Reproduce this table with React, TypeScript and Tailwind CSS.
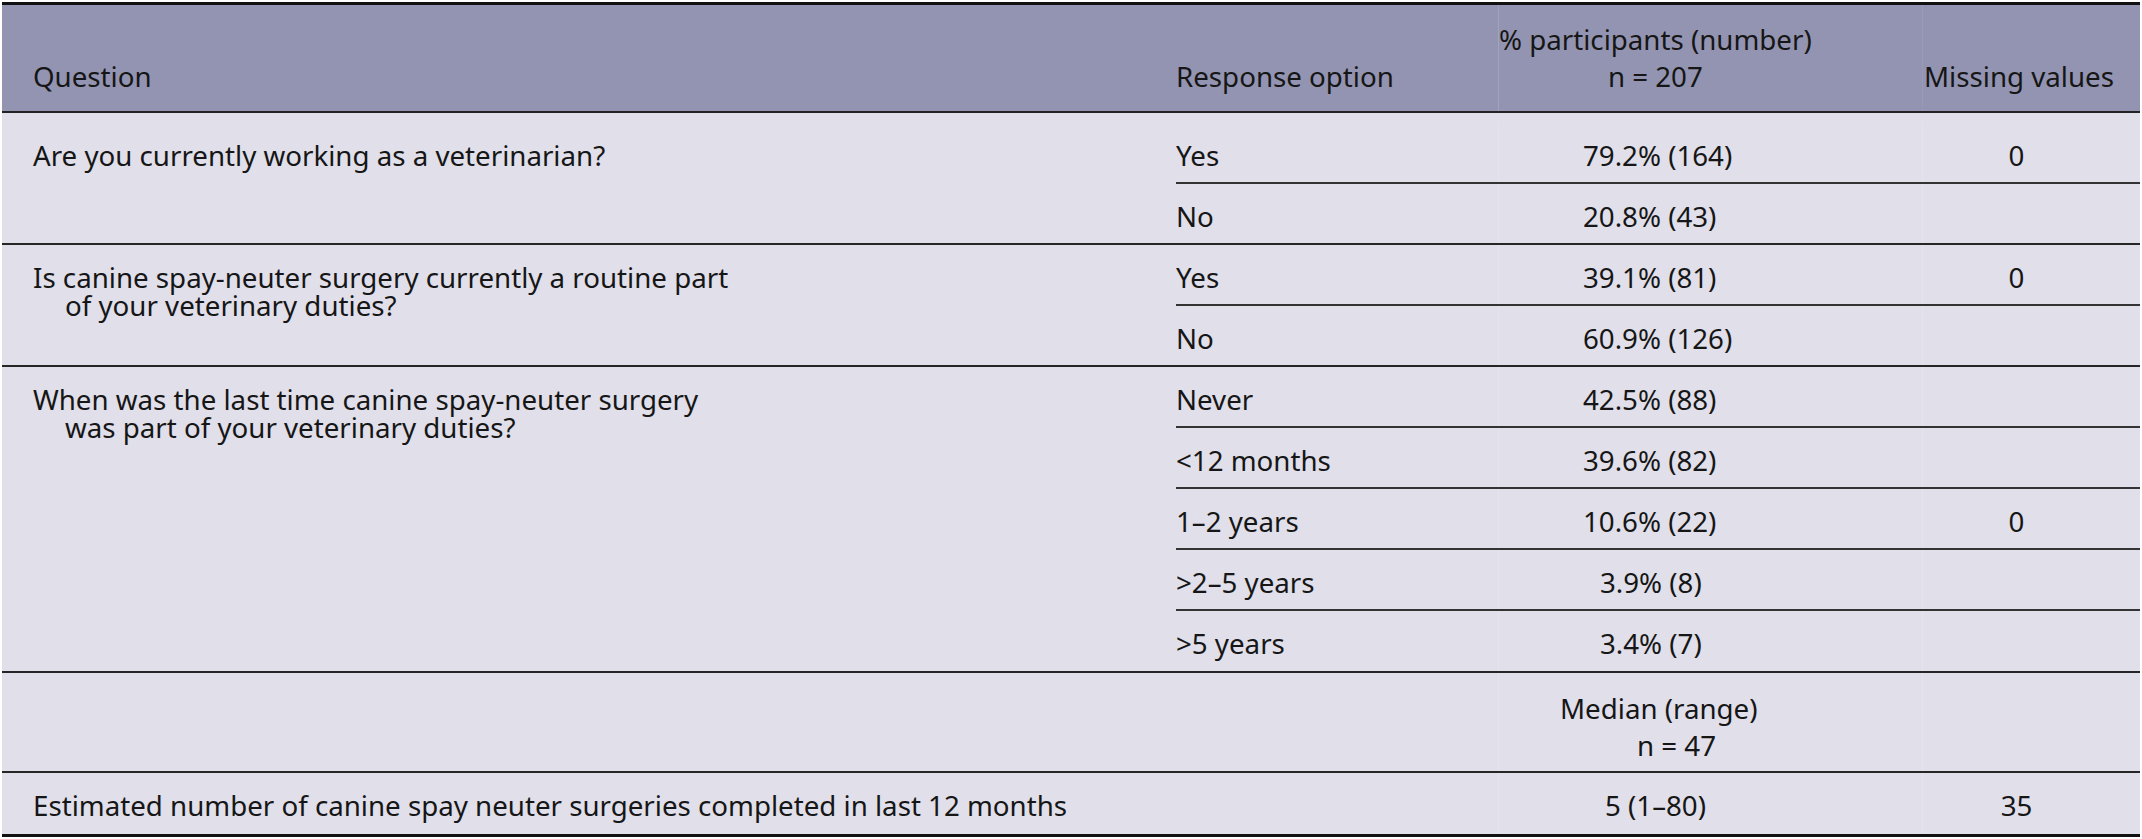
import React from 'react';

interface Option {
    label: string;
    value: string;
    missing?: string;
    shift?: boolean;
}

interface Group {
    question: string[];
    options: Option[];
}

const groups: Group[] = [
    {
        question: ['Are you currently working as a veterinarian?'],
        options: [
            { label: 'Yes', value: '79.2% (164)', missing: '0' },
            { label: 'No', value: '20.8% (43)' },
        ],
    },
    {
        question: ['Is canine spay-neuter surgery currently a routine part', 'of your veterinary duties?'],
        options: [
            { label: 'Yes', value: '39.1% (81)', missing: '0' },
            { label: 'No', value: '60.9% (126)' },
        ],
    },
    {
        question: ['When was the last time canine spay-neuter surgery', 'was part of your veterinary duties?'],
        options: [
            { label: 'Never', value: '42.5% (88)' },
            { label: '<12 months', value: '39.6% (82)' },
            { label: '1–2 years', value: '10.6% (22)', missing: '0' },
            { label: '>2–5 years', value: '3.9% (8)', shift: true },
            { label: '>5 years', value: '3.4% (7)', shift: true },
        ],
    },
];

export default function App() {
    return (
        <div
            className="w-[2142px] h-[839px] bg-white pt-[2px] text-[27.7px] text-[#161616]"
            style={{ fontFamily: '"Noto Sans", "Open Sans", sans-serif' }}
        >
            <div className="ml-[2px] w-[2138px] border-t-[3px] border-[#111] bg-[#e0dfea]">
                {/* Header */}
                <div className="flex h-[108px] items-end border-b-2 border-[#222] bg-[#9394b1] leading-[37px]">
                    <div className="w-[1174px] pl-[31px] pb-[16px]">Question</div>
                    <div className="w-[322px] pb-[16px]">Response option</div>
                    <div className="h-full w-[424px] border-l border-[#a2a3bd] flex items-end pb-[16px]">
                        <div className="inline-block text-center">
                            <div>% participants (number)</div>
                            <div>n = 207</div>
                        </div>
                    </div>
                    <div className="h-full flex-1 border-l border-[#999ab5] flex items-end pb-[16px]">
                        <div className="pl-px">Missing values</div>
                    </div>
                </div>

                {/* Body */}
                <div className="pt-[10px]">
                    {groups.map((group, gi) => (
                        <div key={gi} className="flex border-b-2 border-[#262626]">
                            <div className="w-[1174px] pl-[31px] pt-[18px] leading-[28px]">
                                <div>{group.question[0]}</div>
                                {group.question[1] && <div className="pl-[32px]">{group.question[1]}</div>}
                            </div>
                            <div className="flex-1">
                                {group.options.map((opt, oi) => {
                                    const last = oi === group.options.length - 1;
                                    return (
                                        <div
                                            key={oi}
                                            className={`flex leading-[37px] ${
                                                last ? (gi === 2 ? 'h-[60px]' : 'h-[59px]') : 'h-[61px] border-b-2 border-[#333]'
                                            }`}
                                        >
                                            <div className="w-[322px] pt-[14px]">{opt.label}</div>
                                            <div
                                                className={`w-[424px] border-l border-[#e5e4ee] pt-[14px] ${
                                                    opt.shift ? 'pl-[101px]' : 'pl-[84px]'
                                                }`}
                                            >
                                                {opt.value}
                                            </div>
                                            <div className="flex-1 border-l border-[#e5e4ee] pr-[30px] pt-[14px] text-center">
                                                {opt.missing}
                                            </div>
                                        </div>
                                    );
                                })}
                            </div>
                        </div>
                    ))}

                    {/* Median row */}
                    <div className="flex h-[100px] border-b-2 border-[#262626] leading-[37px]">
                        <div className="w-[1496px]" />
                        <div className="w-[424px] border-l border-[#e5e4ee] pt-[17px]">
                            <div className="pl-[61px]">Median (range)</div>
                            <div className="pl-[138px]">n = 47</div>
                        </div>
                        <div className="flex-1 border-l border-[#e5e4ee]" />
                    </div>

                    {/* Estimated row */}
                    <div className="flex h-[64px] border-b-[3px] border-[#111] leading-[37px]">
                        <div className="w-[1496px] pl-[31px] pt-[14px]">
                            Estimated number of canine spay neuter surgeries completed in last 12 months
                        </div>
                        <div className="w-[424px] border-l border-[#e5e4ee] pl-[106px] pt-[14px]">5 (1–80)</div>
                        <div className="flex-1 border-l border-[#e5e4ee] pr-[30px] pt-[14px] text-center">35</div>
                    </div>
                </div>
            </div>
        </div>
    );
}
